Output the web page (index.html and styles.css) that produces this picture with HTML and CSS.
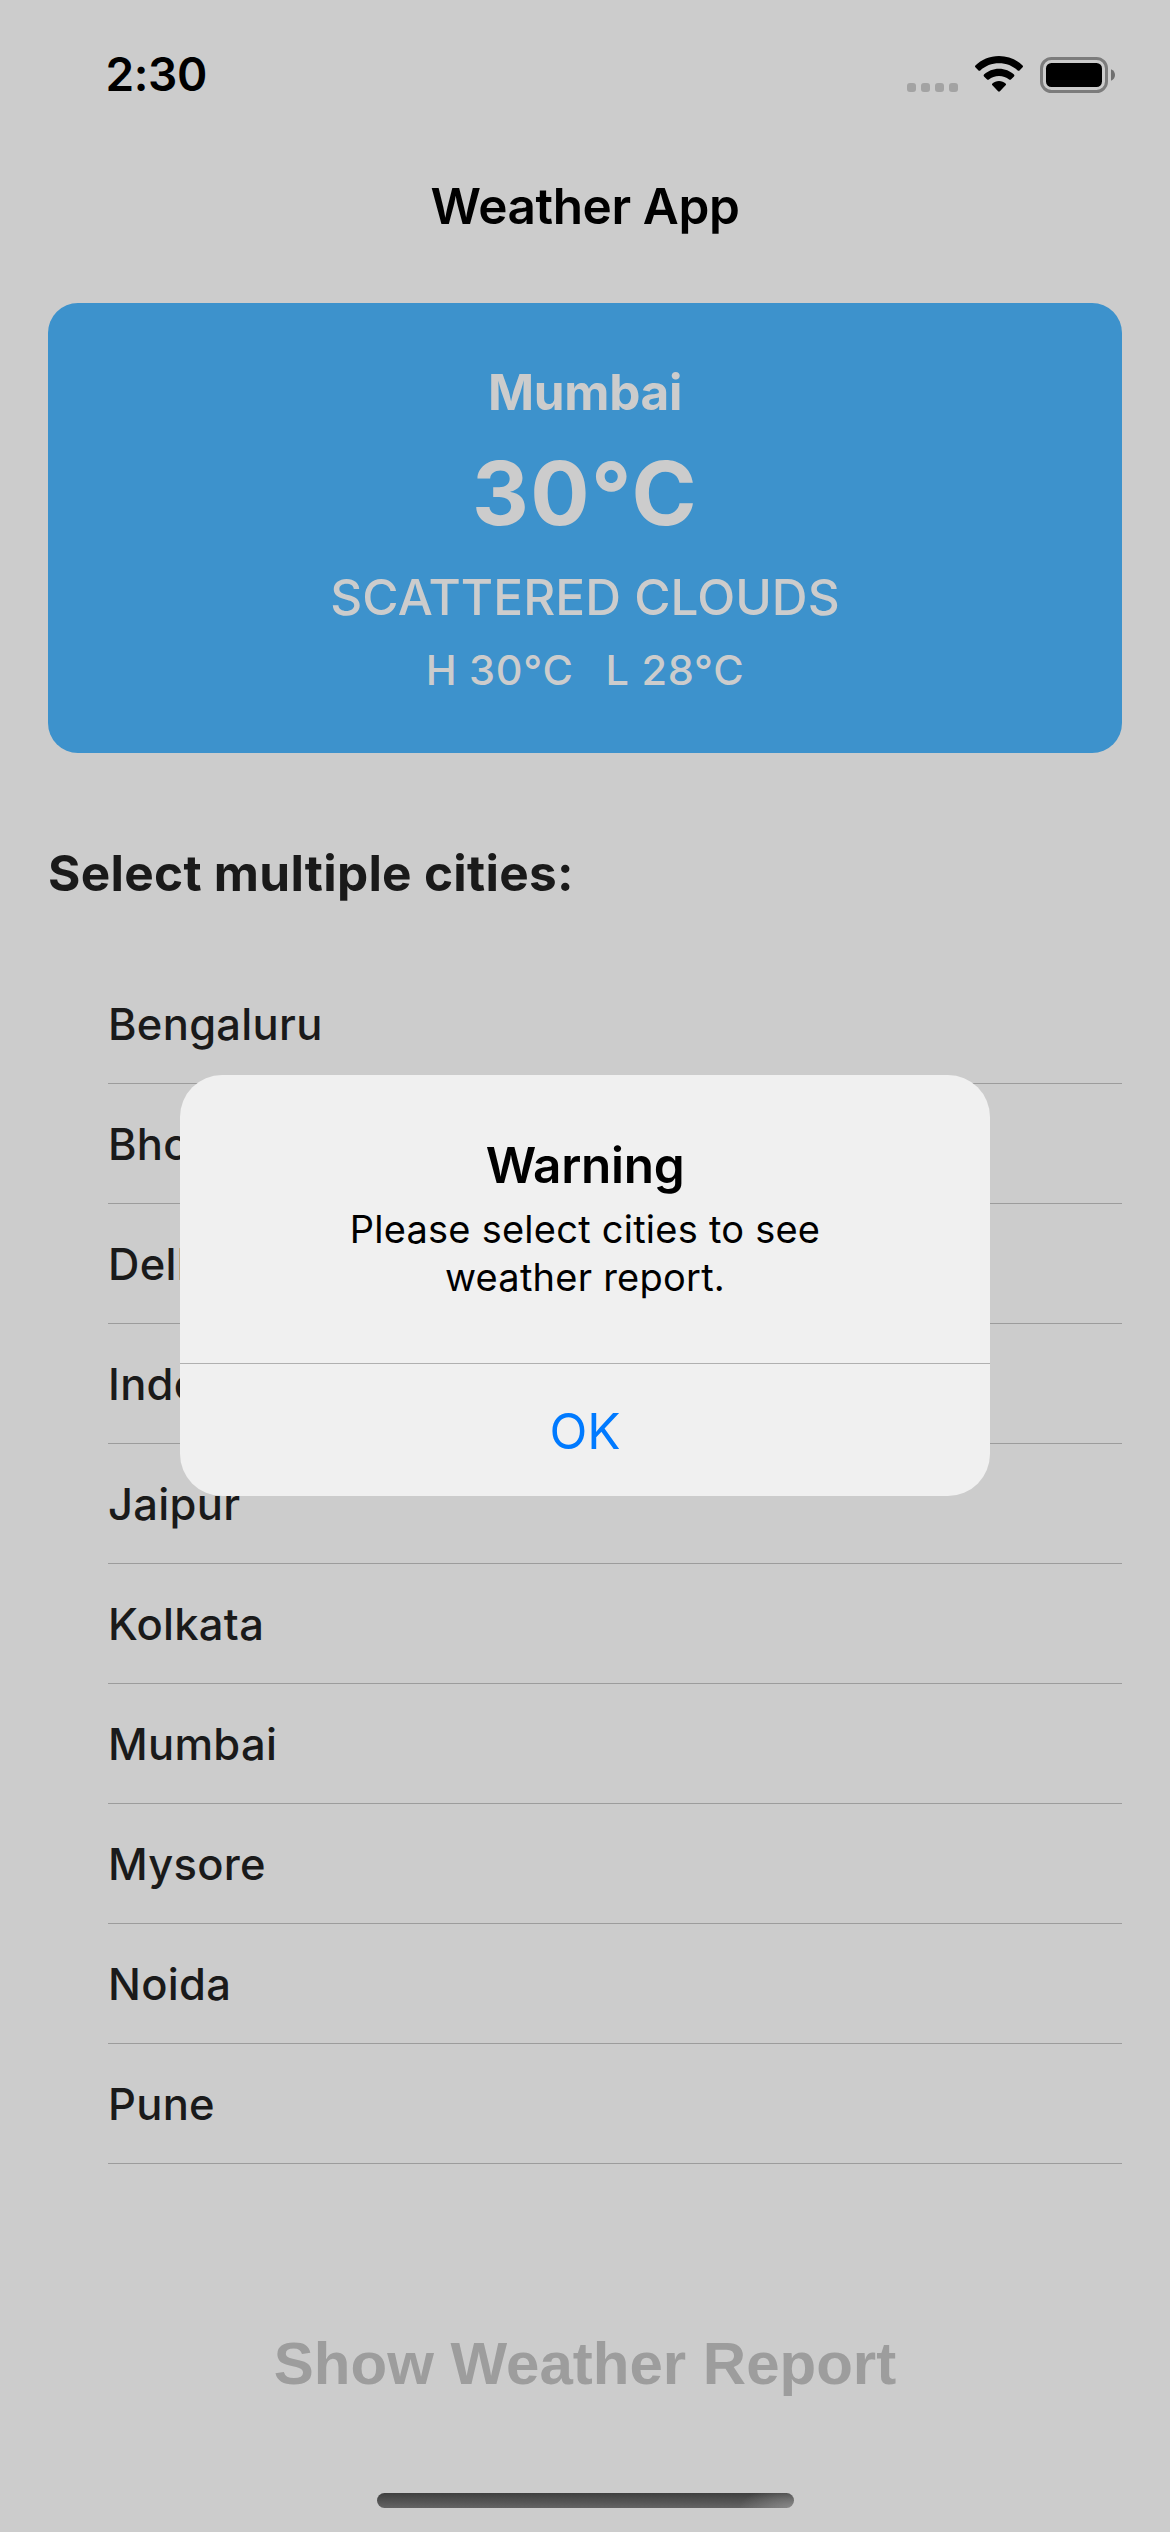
FILE: index.html
```
<!DOCTYPE html>
<html lang="en">
<head>
<meta charset="utf-8">
<title>Weather App</title>
<link rel="stylesheet" href="styles.css">
</head>
<body>
<div class="screen">
  <header class="status-bar">
    <span class="time">2:30</span>
    <div class="status-icons">
      <div class="signal"><i></i><i></i><i></i><i></i></div>
      <svg class="wifi" width="48" height="36" viewBox="0 0 48 36">
        <path d="M24 0C33.300 0 41.700 3.600 47.600 9.600Q48.400 10.500 47.600 11.300L44.500 14.400Q43.600 15.300 42.700 14.400C37.800 9.800 31.200 7.200 24 7.200S10.200 9.800 5.300 14.400Q4.400 15.300 3.500 14.400L.4 11.300Q-.4 10.500.4 9.600C6.300 3.600 14.700 0 24 0Z"/>
        <path d="M24 12.800C29.900 12.800 35.200 15 39 18.600Q39.900 19.500 39 20.400L35.900 23.400Q35 24.300 34.100 23.400C31.400 21.200 27.900 19.900 24 19.900S16.600 21.200 13.900 23.400Q13 24.300 12.100 23.400L9 20.400Q8.100 19.500 9 18.600C12.800 15 18.100 12.800 24 12.800Z"/>
        <path d="M24 25.100C26.600 25.100 28.900 26 30.600 27.500Q31.500 28.400 30.600 29.200L24.900 35.300Q24 36.200 23.100 35.300L17.400 29.200Q16.500 28.400 17.400 27.500C19.100 26 21.400 25.100 24 25.100Z"/>
      </svg>
      <svg class="battery" width="75" height="36" viewBox="0 0 75 36">
        <rect x="1.500" y="1.500" width="65" height="33" rx="10" fill="none" stroke="#7c7c7c" stroke-width="3"/>
        <rect x="6" y="6" width="56" height="24" rx="5.500"/>
        <path d="M71 12.200C73.600 13.300 75 15.500 75 18S73.600 22.700 71 23.800Z" fill="#707070"/>
      </svg>
    </div>
  </header>
  <h1 class="title">Weather App</h1>
  <main class="content">
    <section class="card">
      <div class="city">Mumbai</div>
      <div class="temp">30°C</div>
      <div class="condition">SCATTERED CLOUDS</div>
      <div class="range"><span>H 30°C</span><span>L 28°C</span></div>
    </section>
    <h2 class="heading">Select multiple cities:</h2>
    <ul class="cities">
      <li>Bengaluru</li>
      <li>Bhopal</li>
      <li>Delhi</li>
      <li>Indore</li>
      <li>Jaipur</li>
      <li>Kolkata</li>
      <li>Mumbai</li>
      <li>Mysore</li>
      <li>Noida</li>
      <li>Pune</li>
    </ul>
    <button class="report" disabled>Show Weather Report</button>
  </main>
  <div class="home-indicator"></div>
  <div class="overlay">
    <div class="alert" role="alertdialog">
      <div class="alert-title">Warning</div>
      <p class="alert-message">Please select cities to see<br>weather report.</p>
      <button class="alert-action">OK</button>
    </div>
  </div>
</div>
</body>
</html>
```
FILE: styles.css
```
* { box-sizing: border-box; }
body { margin: 0; background: #ccc; color: #1a1a1a; font-family: Inter, "Liberation Sans", sans-serif; }
h1, h2, p, ul { margin: 0; padding: 0; }
button { border: 0; background: none; padding: 0; font: inherit; }

.screen { position: relative; display: flex; flex-direction: column; width: 1170px; height: 2532px; overflow: hidden; }

.status-bar { display: flex; justify-content: space-between; align-items: center; height: 148px; padding: 0 55px 0 105.5px; color: #000; }
.time { font-size: 46px; font-weight: 600; letter-spacing: -.4px; line-height: 60px; }
.status-icons { display: flex; align-items: flex-end; }
.signal { display: flex; gap: 5px; margin: 0 17px 1px 0; }
.signal i { width: 9px; height: 9px; border-radius: 3px; background: #a3a3a3; }
.wifi { margin: 0 17px 1px 0; }

.title { height: 117px; line-height: 117px; text-align: center; color: #000; font-size: 49.5px; font-weight: 600; letter-spacing: -.39px; }

.content { display: flex; flex-direction: column; padding: 38px 48px 0; }
.card { height: 450px; padding-top: 59px; border-radius: 30px; background: #3d92cc; color: #ccc; text-align: center; }
.city { font-size: 49.5px; font-weight: 700; letter-spacing: -.3px; line-height: 60px; }
.temp { margin-top: 20px; font-size: 88px; font-weight: 700; letter-spacing: 1.4px; line-height: 103px; }
.condition { margin-top: 22px; font-size: 49.5px; font-weight: 540; letter-spacing: .05px; line-height: 60px; }
.range { display: flex; justify-content: center; gap: 32px; margin-top: 18px; font-size: 41.5px; font-weight: 540; letter-spacing: .7px; line-height: 50px; }

.heading { margin-top: 90px; font-size: 49.5px; font-weight: 700; letter-spacing: .29px; line-height: 60px; }

.cities { margin: 61px 0 0 60px; list-style: none; font-size: 43.5px; font-weight: 500; letter-spacing: .28px; }
.cities li { height: 120px; border-bottom: 1px solid #9c9c9c; line-height: 120px; }

.report { margin-top: 160px; color: #9d9d9d; font: bold 60px/80px "Liberation Sans", Arial, sans-serif; }

.home-indicator { width: 417px; height: 15px; margin: 89px 0 0 377px; border-radius: 8px; background: radial-gradient(ellipse 55px 22px at 100% 100%, rgba(155, 155, 155, .7), transparent), linear-gradient(#3f3f3f, #646464); }

.overlay { position: absolute; inset: 0; display: flex; flex-direction: column; align-items: center; padding-top: 1075px; }
.alert { display: flex; flex-direction: column; width: 810px; height: 421px; overflow: hidden; border-radius: 42px; background: #f0f0f0; color: #000; text-align: center; }
.alert-title { padding-top: 60px; font-size: 49.5px; font-weight: 600; letter-spacing: -.31px; line-height: 60px; }
.alert-message { margin-top: 10px; font-size: 38px; letter-spacing: .24px; line-height: 48px; }
.alert-action { height: 133px; margin-top: auto; padding-top: 1px; border-top: 1px solid #b0b0b0; color: #007aff; font-size: 49.5px; }
```
